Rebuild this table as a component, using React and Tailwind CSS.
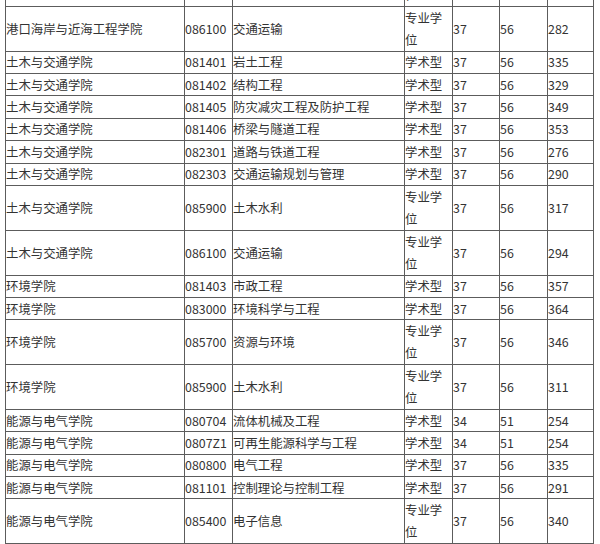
import React from "react";

const rows = [
  ["港口海岸与近海工程学院", "086100", "交通运输", "专业学位", "37", "56", "282"],
  ["土木与交通学院", "081401", "岩土工程", "学术型", "37", "56", "335"],
  ["土木与交通学院", "081402", "结构工程", "学术型", "37", "56", "329"],
  ["土木与交通学院", "081405", "防灾减灾工程及防护工程", "学术型", "37", "56", "349"],
  ["土木与交通学院", "081406", "桥梁与隧道工程", "学术型", "37", "56", "353"],
  ["土木与交通学院", "082301", "道路与铁道工程", "学术型", "37", "56", "276"],
  ["土木与交通学院", "082303", "交通运输规划与管理", "学术型", "37", "56", "290"],
  ["土木与交通学院", "085900", "土木水利", "专业学位", "37", "56", "317"],
  ["土木与交通学院", "086100", "交通运输", "专业学位", "37", "56", "294"],
  ["环境学院", "081403", "市政工程", "学术型", "37", "56", "357"],
  ["环境学院", "083000", "环境科学与工程", "学术型", "37", "56", "364"],
  ["环境学院", "085700", "资源与环境", "专业学位", "37", "56", "346"],
  ["环境学院", "085900", "土木水利", "专业学位", "37", "56", "311"],
  ["能源与电气学院", "080704", "流体机械及工程", "学术型", "34", "51", "254"],
  ["能源与电气学院", "0807Z1", "可再生能源科学与工程", "学术型", "34", "51", "254"],
  ["能源与电气学院", "080800", "电气工程", "学术型", "37", "56", "335"],
  ["能源与电气学院", "081101", "控制理论与控制工程", "学术型", "37", "56", "291"],
  ["能源与电气学院", "085400", "电子信息", "专业学位", "37", "56", "340"],
];

function Row({ cells, hidden }) {
  const tall = cells[3] === "专业学位";
  const h = tall ? "h-[44.8px]" : "h-[22.4px]";
  return (
    <>
      {cells.map((c, i) => (
        <div
          key={i}
          className={`${h} flex items-center border-r border-b border-[#5c5c5c] overflow-hidden`}
        >
          <span className={hidden && i !== 3 ? "invisible" : ""}>{c}</span>
        </div>
      ))}
    </>
  );
}

export default function App() {
  return (
    <div className="w-[600px] h-[544px] overflow-hidden bg-white">
      <div
        className="ml-[5px] -mt-[38px] w-[589px] grid grid-cols-[179px_48px_172px_48px_47px_48px_46px] border-l border-[#5c5c5c] text-[12.4px] leading-[22px] text-[#333333]"
        style={{ fontFamily: '"Noto Sans CJK SC", "Noto Sans", sans-serif' }}
      >
        <Row cells={["港口海岸与近海工程学院", "085900", "土木水利", "专业学位", "37", "56", "300"]} hidden />
        {rows.map((r, i) => (
          <Row key={i} cells={r} />
        ))}
      </div>
    </div>
  );
}
